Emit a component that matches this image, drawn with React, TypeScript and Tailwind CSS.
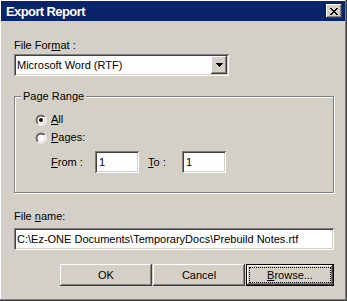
import React from "react";

const sunken =
  "shadow-[inset_1px_1px_#808080,inset_-1px_-1px_#ffffff,inset_2px_2px_#404040,inset_-2px_-2px_#d4d0c8]";
const raised =
  "shadow-[inset_-1px_-1px_#404040,inset_1px_1px_#ffffff,inset_-2px_-2px_#808080]";

function Radio({ checked }: { checked?: boolean }) {
  return (
    <svg width="12" height="12" viewBox="0 0 12 12" className="shrink-0">
      <defs>
        <linearGradient id="ro" x1="0" y1="0" x2="1" y2="1">
          <stop offset="0.5" stopColor="#808080" />
          <stop offset="0.5" stopColor="#ffffff" />
        </linearGradient>
        <linearGradient id="ri" x1="0" y1="0" x2="1" y2="1">
          <stop offset="0.5" stopColor="#404040" />
          <stop offset="0.5" stopColor="#d4d0c8" />
        </linearGradient>
      </defs>
      <circle cx="6" cy="6" r="5.5" fill="url(#ro)" />
      <circle cx="6" cy="6" r="4.5" fill="url(#ri)" />
      <circle cx="6" cy="6" r="3.6" fill="#ffffff" />
      {checked && <circle cx="6" cy="6" r="2" fill="#000000" />}
    </svg>
  );
}

function CloseX() {
  const px: React.ReactNode[] = [];
  for (let i = 0; i < 7; i++) {
    px.push(<rect key={"a" + i} x={i} y={i} width={2} height={1} fill="#000" />);
    px.push(<rect key={"b" + i} x={6 - i} y={i} width={2} height={1} fill="#000" />);
  }
  return (
    <svg width="8" height="7" viewBox="0 0 8 7" shapeRendering="crispEdges">
      {px}
    </svg>
  );
}

export default function App() {
  return (
    <div className="w-[347px] h-[301px] bg-[#d4d0c8] font-['Liberation_Sans',Arial,sans-serif] text-[11px] leading-[13px] text-black pl-[1px] pt-[1px] pr-[2px] pb-[2px] shadow-[inset_-1px_-1px_#404040,inset_-2px_-2px_#808080,inset_1px_1px_#ffffff] flex flex-col">
      {/* Title bar */}
      <div className="h-[20px] bg-[#0a246a] flex items-center justify-between pl-[5px] pr-[3px]">
        <span className="text-white font-bold text-[13px] tracking-[-0.6px] leading-[15px]">
          Export Report
        </span>
        <div className={`w-[16px] h-[14px] bg-[#d4d0c8] flex items-center justify-center ${raised}`}>
          <CloseX />
        </div>
      </div>

      <div className="ml-[13px] w-[320px] flex flex-col">
        <div className="mt-[18px] h-[13px]">
          File For<u>m</u>at :
        </div>
        <div className={`mt-[2px] w-[215px] h-[22px] bg-white flex items-center pl-[3px] pr-[2px] ${sunken}`}>
          <span className="flex-1">Microsoft Word (RTF)</span>
          <div className={`w-[16px] h-[18px] bg-[#d4d0c8] flex items-center justify-center ${raised}`}>
            <svg width="7" height="4" viewBox="0 0 7 4" shapeRendering="crispEdges">
              <path d="M0 0h7v1h-1v1h-1v1h-1v1h-1v-1h-1v-1h-1v-1h-1z" fill="#000" />
            </svg>
          </div>
        </div>

        {/* Page Range group */}
        <div className="relative mt-[20px] w-[320px] h-[97px] border border-[#808080] shadow-[inset_1px_1px_#ffffff,1px_1px_#ffffff] flex flex-col pl-[20px]">
          <span className="absolute left-[6px] top-[-7px] bg-[#d4d0c8] px-[2px] leading-[13px]">
            Page Range
          </span>
          <div className="mt-[16px] h-[13px] flex items-center gap-[4px]">
            <Radio checked />
            <span>
              <u>A</u>ll
            </span>
          </div>
          <div className="mt-[5px] h-[13px] flex items-center gap-[4px]">
            <Radio />
            <span>
              <u>P</u>ages:
            </span>
          </div>
          <div className="mt-[7px] h-[22px] flex items-center pl-[16px]">
            <span className="w-[44px]">
              <u>F</u>rom :
            </span>
            <div className={`w-[44px] h-[22px] bg-white flex items-center pl-[4px] ${sunken}`}>1</div>
            <span className="ml-[9px] w-[34px]">
              <u>T</u>o :
            </span>
            <div className={`w-[44px] h-[22px] bg-white flex items-center pl-[4px] ${sunken}`}>1</div>
          </div>
        </div>

        <div className="mt-[17px] h-[13px]">
          File <u>n</u>ame:
        </div>
        <div className={`mt-[5px] w-[320px] h-[22px] bg-white flex items-center pl-[3px] ${sunken}`}>
          C:\Ez-ONE Documents\TemporaryDocs\Prebuild Notes.rtf
        </div>

        <div className="mt-[14px] flex justify-end gap-[1px]">
          <div className={`w-[92px] h-[22px] bg-[#d4d0c8] flex items-center justify-center ${raised}`}>OK</div>
          <div className={`w-[92px] h-[22px] bg-[#d4d0c8] flex items-center justify-center ${raised}`}>Cancel</div>
          <div className={`w-[88px] h-[22px] bg-[#d4d0c8] border border-black flex ${raised}`}>
            <div className="flex-1 m-[2px] border border-dotted border-black flex items-center justify-center">
              <span>
                <u>B</u>rowse...
              </span>
            </div>
          </div>
        </div>
      </div>
    </div>
  );
}
